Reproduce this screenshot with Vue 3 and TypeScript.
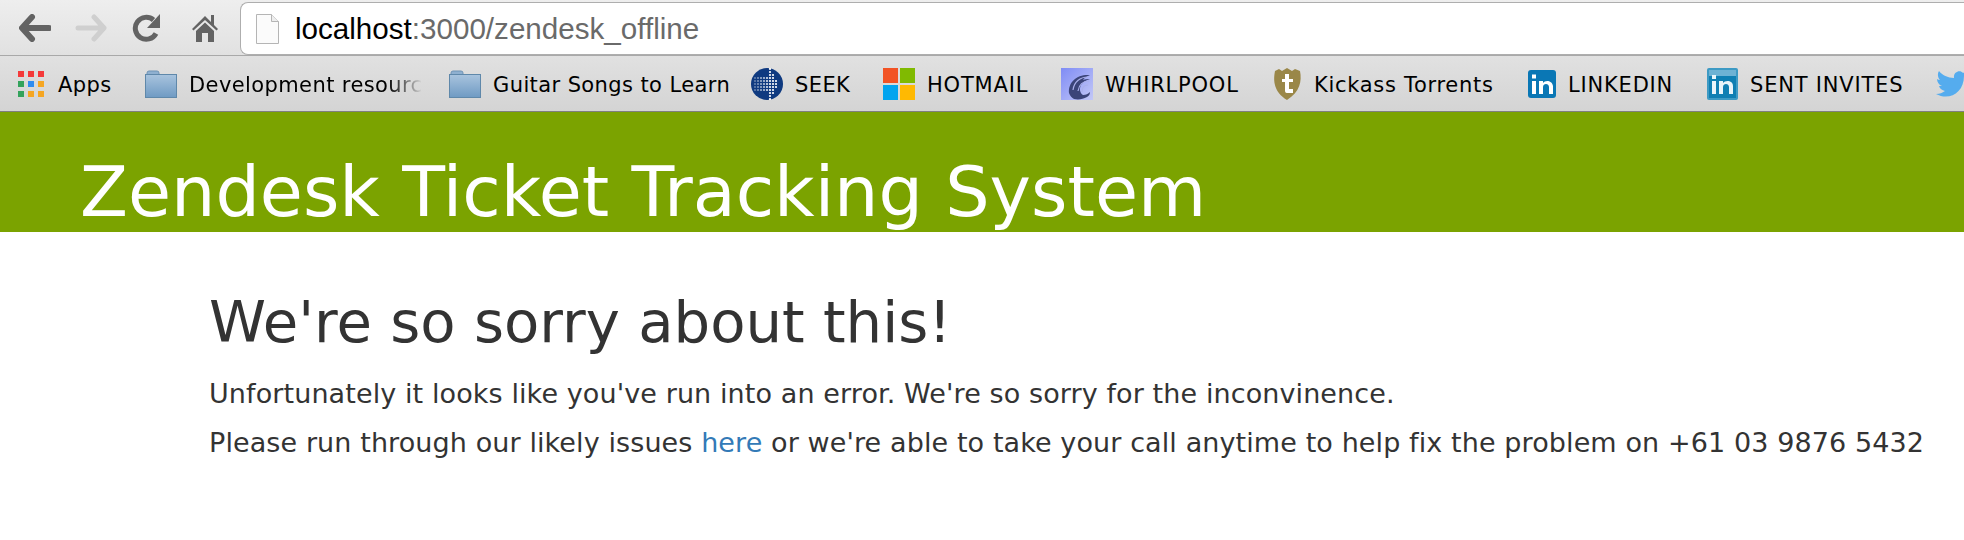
<script setup lang="ts">
// Dots of the SEEK arrow: columns get taller towards the head, then taper to the tip.
const seekDots: { x: number; y: number; o: number }[] = []
const cols: [number, number, number][] = [
  [4, 2, 0.35], [7, 2, 0.45], [10, 2, 0.6], [13, 2, 0.7], [16, 2, 0.85],
  [19, 5, 1], [22, 3, 1], [25, 1, 1],
]
for (const [x, half, o] of cols) {
  for (let i = -half; i <= half; i++) {
    seekDots.push({ x, y: 16 + i * 3, o })
  }
}
</script>

<template>
  <div class="page">
    <div class="chrome">
      <div class="toolbar">
        <div class="nav">
          <svg class="nav-icon back" width="32" height="28" viewBox="0 0 32 28"><path d="M13 3 3 14l10 11M4 14h26" fill="none" stroke="#636363" stroke-width="6" stroke-linecap="round" stroke-linejoin="round"/></svg>
          <svg class="nav-icon fwd" width="32" height="28" viewBox="0 0 32 28"><path d="M19 3l10 11-10 11M28 14H3" fill="none" stroke="#cfcfcf" stroke-width="5" stroke-linecap="round" stroke-linejoin="round"/></svg>
          <svg class="nav-icon reload" width="30" height="30" viewBox="0 0 30 30"><path d="M24 20.500A11 11 0 1 1 21.500 7" fill="none" stroke="#636363" stroke-width="5"/><path d="M28 1v14H15z" fill="#636363"/></svg>
          <svg class="nav-icon home" width="26" height="28" viewBox="0 0 26 28"><path d="M0 15 13 2l6 6V1h3v10l4 4-1.500 1.500L13 6 1.500 16.500zM4 17l9-8.500 9 8.500v11h-6v-9h-6v9H4z" fill="#636363"/></svg>
        </div>
        <div class="omnibox">
          <svg class="page-icon" width="23" height="30" viewBox="0 0 23 30"><path d="M.5.5h15l7 7v22H.500z" fill="#fbfbfb" stroke="#b5b5b5"/><path d="M15.500.5v7h7" fill="#eee" stroke="#b5b5b5"/></svg>
          <span class="url"><b>localhost</b>:3000/zendesk_offline</span>
        </div>
      </div>
      <div class="bookmarks">
        <div class="bm apps">
          <div class="grid"><i class="r"/><i class="r"/><i class="r"/><i class="g"/><i class="b"/><i class="o"/><i class="g"/><i class="o"/><i class="o"/></div>
          <span>Apps</span>
        </div>
        <div class="bm dev">
          <svg class="folder" width="32" height="28" viewBox="0 0 32 28"><use href="#fld"/></svg>
          <span class="fade">Development resourc</span>
        </div>
        <div class="bm guitar">
          <svg class="folder" width="32" height="28" viewBox="0 0 32 28"><use href="#fld"/></svg>
          <span>Guitar Songs to Learn</span>
        </div>
        <div class="bm seek">
          <svg width="32" height="32" viewBox="0 0 32 32"><circle cx="16" cy="16" r="16" fill="#0f3a80"/><circle v-for="(d, i) in seekDots" :key="i" :cx="d.x" :cy="d.y" r="1.100" fill="#fff" :opacity="d.o"/></svg>
          <span>SEEK</span>
        </div>
        <div class="bm hotmail caps">
          <div class="ms"><i class="m1"/><i class="m2"/><i class="m3"/><i class="m4"/></div>
          <span>HOTMAIL</span>
        </div>
        <div class="bm whirl caps">
          <svg width="32" height="32" viewBox="0 0 32 32"><defs><linearGradient id="wg" x1="0" y1="0" x2="1" y2="1"><stop offset="0" stop-color="#7f8cf5"/><stop offset="1" stop-color="#c3c8f7"/></linearGradient></defs><rect width="32" height="32" fill="url(#wg)"/><path d="M29 7C16 6 7 14 8 25c1 3 3 5 5 6 5 1 9 0 13-2 2-1 3-3 3-5-2 2-4 3-7 3-3-2-4-6-2-10 2-3 5-5 9-6-3 0-5 0-7 1 1-2 3-3 7-5z" fill="#3b4479"/><path d="M27 9c-8 0-14 5-15 13M28 13c-6 0-10 4-11 10M27 17c-4 0-6 3-6 7" fill="none" stroke="#aab0ea" stroke-width="1.200"/></svg>
          <span>WHIRLPOOL</span>
        </div>
        <div class="bm kick">
          <svg width="29" height="32" viewBox="0 0 29 32"><path d="M2 3l4-2 3 2 5-3 5 3 3-2 5 2c2 10 0 21-13 29C1 24 0 13 2 3z" fill="#9a8748"/><path d="M12 6h4v5h4v3h-4v7h4v4h-6c-2 0-2-2-2-3v-8H9v-3h3z" fill="#fff"/></svg>
          <span>Kickass Torrents</span>
        </div>
        <div class="bm li caps">
          <svg width="28" height="28" viewBox="0 0 28 28"><rect width="28" height="28" rx="3" fill="#0a77b5"/><path d="M4 11h4v13H4zM4 4.500h4v4H4zM11 11h4v2c2-3 9-3 10 3v8h-4v-7c0-4-6-4-6 0v7h-4z" fill="#fff"/></svg>
          <span>LINKEDIN</span>
        </div>
        <div class="bm sent caps">
          <svg width="31" height="32" viewBox="0 0 31 32"><rect width="31" height="32" rx="2" fill="#3d9ac4"/><rect x="2" y="2" width="27" height="28" fill="#0f7fb3"/><rect x="2" y="2" width="27" height="6" fill="#6db2d4"/><path d="M5 13h4v13H5zM5 7h4v4H5zM12 13h4v2c2-3 10-3 10 3v8h-4v-7c0-4-6-4-6 0v7h-4z" fill="#e8f4fa"/></svg>
          <span>SENT INVITES</span>
        </div>
        <div class="bm tw">
          <svg width="32" height="26" viewBox="0 0 32 26"><path d="M32 3c-1 .500-2 1-4 1 1-1 2-2 3-4-1 1-3 1.500-4 2-3-4-10-1-9 5C12 7 6 4 3 0c-2 3-1 7 1 9-1 0-2-.500-3-1 0 3 2 6 5 7H3c1 3 3 4 6 5-3 2-5 3-9 3 13 7 28-1 28-18 2-.500 3-1.500 4-2z" fill="#55acee"/></svg>
        </div>
      </div>
    </div>
    <header class="banner"><h1>Zendesk Ticket Tracking System</h1></header>
    <main class="content">
      <h2>We're so sorry about this!</h2>
      <p>Unfortunately it looks like you've run into an error. We're so sorry for the inconvinence.</p>
      <p>Please run through our likely issues <a href="#">here</a> or we're able to take your call anytime to help fix the problem on +61 03 9876 5432</p>
    </main>
    <svg width="0" height="0" class="defs"><defs><g id="fld"><path d="M2 3q0-2 2-2h8q2 0 2 2v2H2z" fill="#8fb0d0" stroke="#6f93b5"/><rect x=".5" y="4.500" width="31" height="23" fill="url(#fg)" stroke="#5f88aa"/></g><linearGradient id="fg" x1="0" y1="0" x2="0" y2="1"><stop offset="0" stop-color="#a9c4de"/><stop offset="1" stop-color="#6f9ac3"/></linearGradient></defs></svg>
  </div>
</template>

<style scoped>
.page { width: 1964px; height: 540px; overflow: hidden; background: #fff; font-family: "DejaVu Sans", sans-serif; }
.chrome { height: 111px; border-bottom: 1px solid #7f7f7f; background: linear-gradient(#eeeeee, #d4d4d4); overflow: hidden; }
.toolbar { height: 55px; display: flex; align-items: flex-start; }
.nav { width: 240px; height: 56px; flex: none; display: flex; align-items: center; padding-left: 19px; box-sizing: border-box; }
.back { margin-right: 24px; }
.fwd { margin-right: 25px; }
.reload { margin-right: 30px; }
.omnibox { flex: 1; height: 53px; margin-top: 2px; box-sizing: border-box; background: #fff; border: 1px solid #aeaeae; border-right: none; border-radius: 8px 0 0 8px; display: flex; align-items: center; padding-left: 15px; }
.page-icon { margin-right: 16px; }
.url { font: 400 29.600px "Liberation Sans", Arial, sans-serif; color: #6a6a6a; }
.url b { font-weight: 400; color: #000; }
.bookmarks { height: 56px; border-top: 1px solid #a9a9a9; box-sizing: border-box; display: flex; align-items: center; padding-left: 18px; white-space: nowrap; font-size: 21px; letter-spacing: 0.4px; color: #000; }
.bm { display: flex; align-items: center; gap: 12px; flex: none; }
.bm span { position: relative; top: 1px; }
.caps span { letter-spacing: 0.8px; }
.apps { width: 127px; gap: 14px; }
.dev { width: 304px; }
.guitar { width: 302px; }
.seek { width: 132px; }
.hotmail { width: 178px; }
.whirl { width: 212px; }
.kick { width: 255px; }
.kick span { letter-spacing: 0.7px; }
.li { width: 179px; }
.sent { width: 229px; }
.fade { -webkit-mask-image: linear-gradient(90deg, #000 85%, transparent); mask-image: linear-gradient(90deg, #000 85%, transparent); }
.grid { display: grid; grid-template-columns: repeat(3, 6px); grid-auto-rows: 6px; gap: 4px; width: 26px; }
.grid i { display: block; }
.r { background: #f43a3a; }
.g { background: #34a35c; }
.b { background: #2f8cf0; }
.o { background: #f5a623; }
.ms { display: grid; grid-template-columns: repeat(2, 15px); grid-auto-rows: 15px; gap: 2px; }
.ms i { display: block; }
.m1 { background: #f25325; }
.m2 { background: #80ba01; }
.m3 { background: #02a4ef; }
.m4 { background: #ffb902; }
.banner { height: 120px; background: #7ba300; padding-left: 80px; overflow: hidden; }
h1 { margin: 0; padding-top: 38px; font-size: 70px; font-weight: 400; line-height: 84px; color: #fff; white-space: nowrap; }
.content { padding: 57px 0 0 209px; color: #333; font-size: 27px; white-space: nowrap; letter-spacing: 0.1px; }
h2 { margin: 0 0 22px; font-size: 57.700px; font-weight: 400; line-height: 66px; letter-spacing: 0; }
p { margin: 0 0 15px; line-height: 34px; }
a { color: #337ab7; text-decoration: none; }
.defs { position: absolute; }
</style>
